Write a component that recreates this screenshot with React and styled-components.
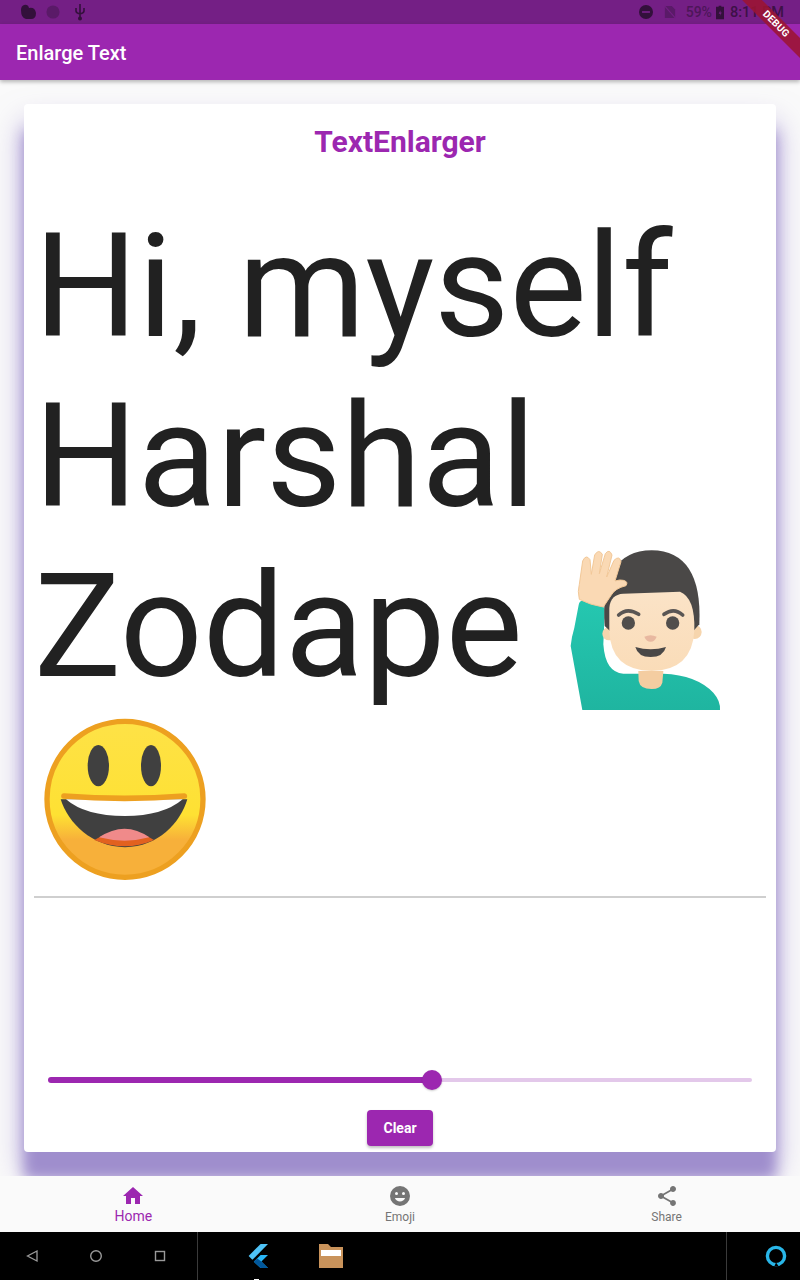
import React from "react";
import styled, { createGlobalStyle } from "styled-components";

const Global = createGlobalStyle`
  html, body { margin: 0; padding: 0; background: #fafafa; }
  * { box-sizing: border-box; }
`;
const Screen = styled.div`
  position: relative; width: 800px; height: 1280px; overflow: hidden;
  display: flex; flex-direction: column; font-family: Roboto, sans-serif; background: #fafafa;
`;
const StatusBar = styled.div`
  height: 24px; flex: none; background: #741f85; display: flex; align-items: center;
  padding: 0 16px 0 20px; color: #42124c; font-size: 14px; font-weight: 500;
`;
const StatusLeft = styled.div`display: flex; align-items: center; gap: 10px; flex: 1;`;
const StatusRight = styled.div`display: flex; align-items: center;`;
const Pct = styled.span`color: #4d1659; margin-left: 10px; margin-right: 4px;`;
const Clock = styled.span`color: #3d1147; margin-left: 6px; font-size: 14.5px;`;
const AppBar = styled.header`
  height: 56px; flex: none; background: #9c27b0; color: #fff; display: flex; align-items: center;
  padding: 2px 16px 0; font-size: 20px; font-weight: 500; position: relative; z-index: 2;
  box-shadow: 0 2px 4px rgba(0,0,0,.28);
`;
const Banner = styled.div`
  position: absolute; top: 17px; right: -32px; width: 112px; height: 14px; transform: rotate(45deg);
  background: rgba(156,20,50,.88); color: #fff; font-size: 10px; font-weight: 700; letter-spacing: .2px;
  text-align: center; line-height: 14px; z-index: 5;
`;
const Body = styled.main`
  flex: 1; min-height: 0; padding: 24px 24px; overflow: hidden; background: #fafafa;
`;
const Card = styled.section`
  height: 1048px; background: #fff; border-radius: 4px; padding: 0 10px; display: flex; flex-direction: column;
  box-shadow: 0 27px 14px 0 #9f8ecd, 0 20px 30px 2px rgba(150,130,205,.55);
`;
const Title = styled.h1`
  margin: 0; height: 98px; padding-top: 20px; text-align: center; color: #9c27b0;
  font-size: 30px; line-height: 35px; font-weight: 700;
`;
const Big = styled.div`
  font-size: 145.5px; line-height: 170px; color: #212121; height: 694px;
`;
const Wave = styled.svg`
  width: 200px; height: 190px; vertical-align: -30px; margin: -20px 0 -15px -19px;
`;
const Smile = styled.svg`
  width: 190px; height: 180px; vertical-align: -30px; margin: -10px 0 -14px -4px;
`;
const Rule = styled.hr`margin: 0; border: 0; height: 2px; background: #cfcfcf; flex: none;`;
const Spacer = styled.div`flex: 1;`;
const SliderRow = styled.div`height: 22px; margin: 0 14px; display: flex; align-items: center;`;
const Active = styled.div`height: 6px; background: #9c27b0; border-radius: 3px 0 0 3px;`;
const Inactive = styled.div`height: 4px; flex: 1; background: #e3c8ea; border-radius: 0 2px 2px 0;`;
const Thumb = styled.div`
  width: 20px; height: 20px; border-radius: 50%; background: #9c27b0; flex: none; margin: 0 -10px; z-index: 1;
  box-shadow: 0 1px 2px rgba(0,0,0,.2);
`;
const ButtonRow = styled.div`display: flex; justify-content: center; padding: 19px 0 6px;`;
const Clear = styled.button`
  width: 66px; height: 36px; border: 0; border-radius: 4px; background: #9c27b0; color: #fff;
  font: 700 14px Roboto, sans-serif; box-shadow: 0 2px 3px rgba(0,0,0,.25); padding: 0;
`;
const BottomNav = styled.nav`
  height: 56px; flex: none; background: #fafafa; display: grid; grid-template-columns: repeat(3, 1fr);
  position: relative; z-index: 2;
`;
const Tab = styled.div`
  display: flex; flex-direction: column; align-items: center; padding-top: 8px;
  color: ${p => (p.$on ? "#9c27b0" : "#757575")};
  font-size: ${p => (p.$on ? "14px" : "12px")};
  line-height: ${p => (p.$on ? "16px" : "14px")};
`;
const TabIcon = styled.div`height: 24px; margin-bottom: ${p => (p.$on ? "0" : "2px")}; display: flex; align-items: center; justify-content: center;`;
const SysBar = styled.div`
  height: 48px; flex: none; background: #000; display: grid; grid-template-columns: 197px 1fr 73px;
`;
const Keys = styled.div`display: flex; align-items: center; padding-left: 24px; gap: 48px;`;
const Apps = styled.div`
  display: flex; align-items: center; gap: 49px; padding-left: 48px; border-left: 1px solid #3a3a3a;
  border-right: 1px solid #3a3a3a; position: relative;
`;
const Marker = styled.div`position: absolute; left: 56px; bottom: 0; width: 5px; height: 1px; background: #fff;`;
const Assist = styled.div`display: flex; align-items: center; padding-left: 38px;`;

const WaveEmoji = () => (
  <Wave viewBox="0 0 600 570" aria-label="man raising hand">
    <defs>
      <linearGradient id="shirt" x1="0" y1="0" x2="0" y2="1">
        <stop offset="0" stopColor="#25c7b0" /><stop offset="1" stopColor="#1fb5a0" />
      </linearGradient>
      <linearGradient id="skin" x1="0" y1="0" x2="0" y2="1">
        <stop offset="0" stopColor="#fbe3c7" /><stop offset="1" stopColor="#fadcb8" />
      </linearGradient>
    </defs>
    <path d="M127 537 L92 345 Q94 320 103 290 L116 222 Q118 206 135 210 L185 224 Q196 228 194 245 L190 340 Q196 425 250 428 L300 428 L370 428 Q470 432 520 485 Q542 510 540 537 Z" fill="url(#shirt)" />
    <path d="M295 420 L370 420 L367 455 Q362 474 335 474 Q300 474 296 450 Z" fill="#f4cda1" />
    <circle cx="207" cy="308" r="20" fill="#f6d5ad" />
    <circle cx="464" cy="303" r="21" fill="#f6d5ad" />
    <path d="M194 285 Q178 60 335 58 Q488 60 478 280 L460 300 L210 300 Z" fill="#4a4847" />
    <path d="M208 230 Q212 190 250 188 L420 182 Q466 200 463 300 Q456 418 335 420 Q212 418 208 300 Z" fill="url(#skin)" />
    <path d="M236 252 Q262 228 296 250" fill="none" stroke="#5a5654" strokeWidth="11" strokeLinecap="round" />
    <path d="M372 250 Q402 228 428 252" fill="none" stroke="#5a5654" strokeWidth="11" strokeLinecap="round" />
    <circle cx="265" cy="276" r="20" fill="#514e4c" />
    <circle cx="398" cy="276" r="20" fill="#514e4c" />
    <path d="M313 317 Q332 308 350 317 Q344 332 332 332 Q319 332 313 317 Z" fill="#e8b8a0" />
    <path d="M286 348 Q332 362 378 348 Q370 378 332 378 Q294 378 286 348 Z" fill="#4a4847" />
    <path d="M118 205 Q112 180 118 160 L128 90 Q138 68 150 86 L154 130 L164 72 Q176 52 187 70 L178 128 L196 68 Q208 52 216 72 L200 138 L222 88 Q238 72 243 92 L225 150 Q240 145 250 148 Q266 152 258 164 Q225 172 214 192 L190 228 Q150 222 118 205 Z" fill="#fad9b4" stroke="#f2c898" strokeWidth="3" />
  </Wave>
);
const SmileEmoji = () => (
  <Smile viewBox="0 0 570 540" aria-label="grinning face">
    <defs>
      <linearGradient id="face" x1="0" y1="0" x2="0" y2="1">
        <stop offset="0" stopColor="#fee247" /><stop offset=".6" stopColor="#fee133" /><stop offset=".76" stopColor="#f7b03a" /><stop offset="1" stopColor="#f7b03a" />
      </linearGradient>
    </defs>
    <circle cx="285" cy="268" r="234" fill="url(#face)" stroke="#eda020" strokeWidth="16" />
    <ellipse cx="205" cy="167" rx="32" ry="62" fill="#404040" />
    <ellipse cx="363" cy="167" rx="30" ry="62" fill="#404040" />
    <path d="M92 268 L472 268 C450 340 385 410 285 412 C185 410 115 340 92 268 Z" fill="#404040" />
    <path d="M193 390 Q285 335 372 390 Q285 428 193 390 Z" fill="#e2611f" />
    <path d="M207 382 Q285 330 358 382 Q285 402 207 382 Z" fill="#f08a8a" />
    <path d="M108 268 L458 268 Q400 318 285 318 Q165 318 108 268 Z" fill="#fff" />
    <path d="M102 258 Q285 272 463 258" stroke="#eda020" strokeWidth="17" strokeLinecap="round" fill="none" />
  </Smile>
);

export default function App() {
  return (
    <Screen>
      <Global />
      <StatusBar>
        <StatusLeft>
          <svg width="16" height="16" viewBox="0 0 16 16"><path d="M1 6 Q1 2 4 1 Q8 0 9 4 Q15 3 16 9 Q16 15 11 15 L6 15 Q1 14 1 6Z" fill="#33103b" /></svg>
          <svg width="14" height="14" viewBox="0 0 16 16"><circle cx="8" cy="8" r="7.5" fill="#5a1a68" /></svg>
          <svg width="14" height="18" viewBox="0 0 14 18" style={{ marginLeft: 3 }}><path d="M7 1 L7 16 M3 5 L3 8 Q3 10 7 11 Q11 10 11 8 L11 5" stroke="#33103b" strokeWidth="1.6" fill="none" /><circle cx="7" cy="15.5" r="2" fill="#33103b" /></svg>
        </StatusLeft>
        <StatusRight>
          <svg width="14" height="14" viewBox="0 0 16 16"><circle cx="8" cy="8" r="8" fill="#33103b" /><rect x="3.5" y="7" width="9" height="2" fill="#741f85" /></svg>
          <svg width="12" height="14" viewBox="0 0 14 16" style={{ marginLeft: 11 }}><path d="M1 1 L9 1 L13 5 L13 15 L1 15 Z" fill="#5a1a68" /><path d="M0 0 L14 16" stroke="#741f85" strokeWidth="1.2" /></svg>
          <Pct>59%</Pct>
          <svg width="8" height="15" viewBox="0 0 9 15"><path d="M3 0 L6 0 L6 1 L9 1 L9 15 L0 15 L0 1 L3 1 Z" fill="#33103b" /><path d="M5 5 L3 9 L5 9 L4 12 L6.5 7.5 L5 7.5 Z" fill="#741f85" /></svg>
          <Clock>8:11 PM</Clock>
        </StatusRight>
      </StatusBar>
      <Banner>DEBUG</Banner>
      <AppBar>Enlarge Text</AppBar>
      <Body>
        <Card>
          <Title>TextEnlarger</Title>
          <Big>Hi, myself Harshal Zodape <WaveEmoji /><SmileEmoji /></Big>
          <Rule />
          <Spacer />
          <SliderRow>
            <Active style={{ width: "54.5%" }} />
            <Thumb />
            <Inactive />
          </SliderRow>
          <ButtonRow><Clear>Clear</Clear></ButtonRow>
        </Card>
      </Body>
      <BottomNav>
        <Tab $on>
          <TabIcon $on>
            <svg width="24" height="24" viewBox="0 0 24 24"><path d="M10 20v-6h4v6h5v-8h3L12 3 2 12h3v8z" fill="#9c27b0" /></svg>
          </TabIcon>
          Home
        </Tab>
        <Tab>
          <TabIcon>
            <svg width="24" height="24" viewBox="0 0 24 24"><path fill="#757575" d="M12 2a10 10 0 1 0 0 20 10 10 0 0 0 0-20zM8.5 8A1.5 1.5 0 1 1 8.5 11 1.5 1.5 0 0 1 8.5 8zm7 0a1.5 1.5 0 1 1 0 3 1.5 1.5 0 0 1 0-3zM12 17.5c-2.3 0-4.3-1.5-5.1-3.5h10.2c-.8 2-2.8 3.5-5.1 3.5z" /></svg>
          </TabIcon>
          Emoji
        </Tab>
        <Tab>
          <TabIcon>
            <svg width="24" height="24" viewBox="0 0 24 24"><path fill="#757575" d="M18 16.08c-.76 0-1.44.3-1.96.77L8.91 12.7c.05-.23.09-.46.09-.7s-.04-.47-.09-.7l7.05-4.11c.54.5 1.25.81 2.04.81 1.66 0 3-1.34 3-3s-1.34-3-3-3-3 1.34-3 3c0 .24.04.47.09.7L8.04 9.81C7.5 9.31 6.79 9 6 9c-1.66 0-3 1.34-3 3s1.34 3 3 3c.79 0 1.5-.31 2.04-.81l7.12 4.16c-.05.21-.08.43-.08.65 0 1.61 1.31 2.92 2.92 2.92 1.61 0 2.92-1.31 2.92-2.92s-1.31-2.92-2.92-2.92z" /></svg>
          </TabIcon>
          Share
        </Tab>
      </BottomNav>
      <SysBar>
        <Keys>
          <svg width="16" height="16" viewBox="0 0 16 16"><path d="M13 3 L3.5 8 L13 13 Z" fill="none" stroke="#9a9a9a" strokeWidth="1.3" /></svg>
          <svg width="16" height="16" viewBox="0 0 16 16"><circle cx="8" cy="8" r="5.3" fill="none" stroke="#9a9a9a" strokeWidth="1.4" /></svg>
          <svg width="16" height="16" viewBox="0 0 16 16"><rect x="3.5" y="3.5" width="9" height="9" fill="none" stroke="#9a9a9a" strokeWidth="1.4" /></svg>
        </Keys>
        <Apps>
          <svg width="24" height="24" viewBox="0 0 24 24">
            <path d="M14.6 0 L2.6 12 L6.4 15.8 L22 0 Z" fill="#4fc3f7" />
            <path d="M14.6 11 L7.8 17.8 L14.6 24 L22 24 L15.4 17.6 L22 11 Z" fill="#29b6f6" />
            <path d="M11.2 14.4 L7.8 17.8 L14.6 24 L22 24 L15.4 17.6 Z" fill="#01579b" />
          </svg>
          <svg width="24" height="24" viewBox="0 0 24 24"><path d="M0 0 L9 0 L12 3 L24 3 L24 24 L0 24 Z" fill="#c9935b" /><rect x="2" y="6" width="20" height="6" fill="#fff" /></svg>
          <Marker />
        </Apps>
        <Assist>
          <svg width="22" height="22" viewBox="0 0 22 22"><circle cx="11" cy="11" r="8.6" fill="none" stroke="#29b6e8" strokeWidth="3.4" /><path d="M9.5 21 L11 17.5 L13.5 21 Z" fill="#000" /></svg>
        </Assist>
      </SysBar>
    </Screen>
  );
}
